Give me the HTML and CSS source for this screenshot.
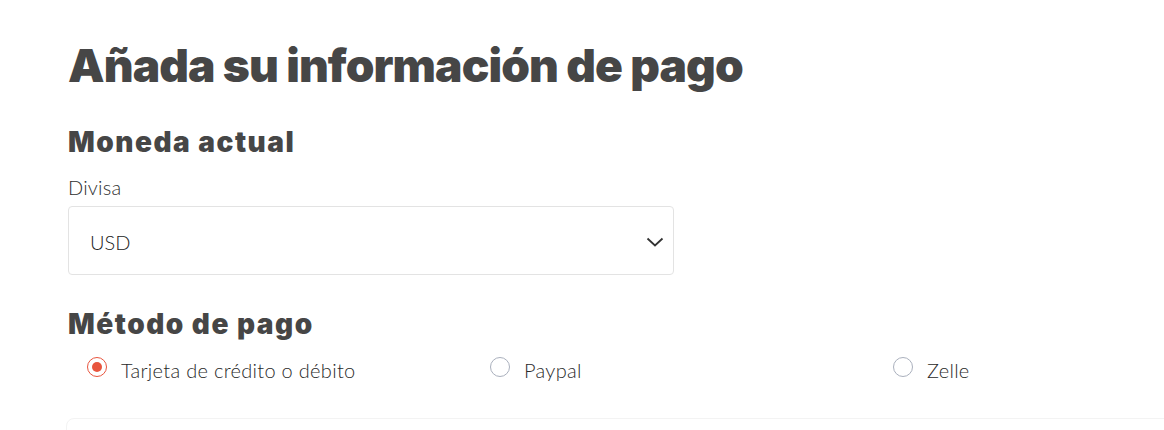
FILE: index.html
```html
<!DOCTYPE html>
<html lang="es">
<head>
<meta charset="utf-8">
<title>Añada su información de pago</title>
<link rel="stylesheet" href="styles.css">
</head>
<body>
<main class="page">
  <h1 class="title">Añada su información de pago</h1>
  <section class="section">
    <h2 class="subtitle">Moneda actual</h2>
    <label class="field-label">Divisa</label>
    <div class="select">
      <span class="select-value">USD</span>
      <svg class="chevron" width="18" height="10" viewBox="0 0 18 10"><path d="M1.5 1.5 L9 8.5 L16.5 1.5" fill="none" stroke="#333" stroke-width="1.8"/></svg>
    </div>
  </section>
  <section class="section methods">
    <h2 class="subtitle">Método de pago</h2>
    <div class="radio-row">
      <label class="radio"><span class="radio-dot checked"></span><span class="radio-text">Tarjeta de crédito o débito</span></label>
      <label class="radio"><span class="radio-dot"></span><span class="radio-text">Paypal</span></label>
      <label class="radio"><span class="radio-dot"></span><span class="radio-text">Zelle</span></label>
    </div>
    <div class="card-box"></div>
  </section>
</main>
</body>
</html>
```

FILE: styles.css
```css
* { box-sizing: border-box; }
html, body { margin: 0; padding: 0; background: #fff; overflow: hidden; }
body { font-family: "Lato", "Liberation Sans", sans-serif; color: #2b2b2b; }
.page { padding: 36px 0 0 68px; width: 1400px; }
.title {
  margin: 0;
  font-family: "Inter", sans-serif;
  font-weight: 900;
  font-size: 46px;
  line-height: 58px;
  color: #464646;
  letter-spacing: -0.9px;
}
.section { margin-top: 31px; }
.subtitle {
  margin: 0;
  font-family: "Inter", sans-serif;
  font-weight: 900;
  font-size: 28px;
  line-height: 34px;
  color: #464646;
  letter-spacing: 1.5px;
}
.field-label {
  display: block;
  margin-top: 15px;
  font-size: 20px;
  font-weight: 300;
  line-height: 26px;
  color: #2e2e2e;
  letter-spacing: 0.2px;
}
.select {
  margin-top: 6px;
  width: 606px;
  height: 69px;
  border: 1px solid #e3e3e3;
  border-radius: 4px;
  display: flex;
  align-items: center;
  justify-content: space-between;
  padding: 0 9px 0 21px;
}
.select-value { font-size: 20px; font-weight: 300; color: #222; padding-top: 2px; }
.chevron { margin-top: 2px; }
.methods { margin-top: 32px; }
.radio-row {
  display: grid;
  grid-template-columns: repeat(3, 403px);
  padding-left: 19px;
  margin-top: 14px;
}
.radio { display: flex; align-items: center; gap: 14px; height: 30px; }
.radio-dot {
  width: 20px; height: 20px;
  border-radius: 50%;
  border: 1px solid #aab0bd;
  position: relative;
  flex: none;
  margin-top: -7px;
}
.radio-dot.checked { border-color: #e8553e; }
.radio-dot.checked::after {
  content: "";
  position: absolute;
  left: 4px; top: 4px;
  width: 10px; height: 10px;
  border-radius: 50%;
  background: #e8553e;
}
.radio-text { font-size: 20px; font-weight: 300; color: #2a2a2a; letter-spacing: 0.3px; }
.card-box {
  margin-top: 33px;
  margin-left: -2px;
  height: 60px;
  border: 1px solid #f3f3f3;
  border-radius: 8px;
}
```
